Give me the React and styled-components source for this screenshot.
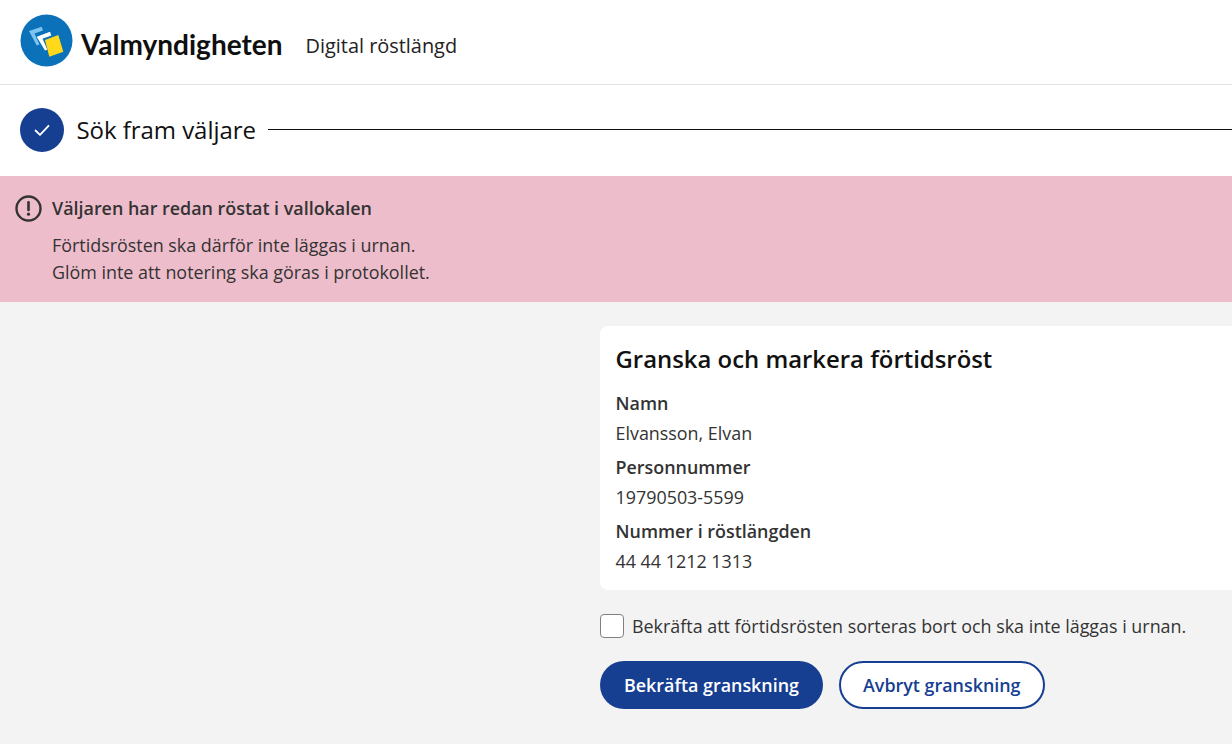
import React from "react";
import styled, { createGlobalStyle } from "styled-components";

const Global = createGlobalStyle`
  html, body { margin: 0; padding: 0; background: #fff; }
  body { font-family: "Open Sans", "Noto Sans", sans-serif; color: #333; overflow: hidden; }
  * { box-sizing: border-box; }
`;

const Page = styled.div`
  width: 1232px;
  height: 744px;
  display: flex;
  flex-direction: column;
  overflow: hidden;
`;

const Header = styled.header`
  height: 85px;
  flex: none;
  display: flex;
  align-items: center;
  padding: 0 0 4px 20px;
  border-bottom: 1px solid #e2e2e2;
`;

const Brand = styled.div`
  display: flex;
  align-items: center;
  gap: 8px;
`;

const BrandName = styled.span`
  font-family: "Lato", sans-serif;
  font-weight: 700;
  font-size: 28px;
  line-height: 32px;
  color: #0f0f0f;
  margin-top: 8px;
`;

const AppName = styled.span`
  margin: 12px 0 0 23px;
  font-size: 19.9px;
  line-height: 28px;
  color: #222;
`;

const Step = styled.section`
  height: 91px;
  flex: none;
  display: flex;
  align-items: center;
  gap: 12px;
  padding: 0 0 2px 20px;
`;

const StepBadge = styled.span`
  width: 44px;
  height: 44px;
  border-radius: 50%;
  background: #163f92;
  display: flex;
  align-items: center;
  justify-content: center;
  flex: none;
`;

const StepTitle = styled.h2`
  margin: 0 0 0 0.5px;
  font-size: 24px;
  line-height: 32px;
  font-weight: 400;
  letter-spacing: -0.05px;
  color: #111;
  white-space: nowrap;
`;

const StepLine = styled.span`
  flex: 1;
  height: 1px;
  background: #111;
`;

const Banner = styled.section`
  height: 126px;
  flex: none;
  background: #eebdcb;
  padding: 18px 16px 0 15px;
  display: grid;
  grid-template-columns: 27px 1fr;
  column-gap: 10px;
  align-content: start;
`;

const BannerIcon = styled.span`
  display: flex;
  padding-top: 1px;
`;

const BannerTitle = styled.div`
  font-size: 17.9px;
  line-height: 28px;
  font-weight: 600;
  color: #333;
`;

const BannerBody = styled.p`
  grid-column: 2;
  margin: 10px 0 0;
  font-size: 17.9px;
  line-height: 27px;
  color: #333;
`;

const Main = styled.main`
  flex: 1;
  background: #f3f3f3;
  padding: 24px 0 0 600px;
  display: flex;
  flex-direction: column;
`;

const Card = styled.section`
  height: 264px;
  width: 660px;
  flex: none;
  background: #fff;
  border-radius: 8px;
  padding: 15px 15.5px 0;
`;

const CardTitle = styled.h3`
  margin: 0 0 11px;
  font-size: 23.9px;
  line-height: 36px;
  font-weight: 600;
  color: #111;
`;

const Label = styled.div`
  font-size: 17.9px;
  line-height: 30px;
  font-weight: 600;
  color: #333;
`;

const Value = styled.div`
  font-size: 17.9px;
  line-height: 30px;
  margin-bottom: 4px;
  color: #333;
`;

const Confirm = styled.label`
  margin-top: 23px;
  display: flex;
  align-items: center;
  gap: 8px;
  font-size: 17.9px;
  line-height: 26px;
  color: #333;
`;

const Box = styled.span`
  width: 24px;
  height: 24px;
  flex: none;
  background: #fff;
  border: 1px solid #808080;
  border-radius: 4px;
`;

const Actions = styled.div`
  margin-top: 22px;
  display: flex;
  gap: 16px;
`;

const Button = styled.button`
  height: 48px;
  padding: 0 ${p => (p.$outline ? "22px" : "24px")};
  border-radius: 24px;
  font-family: inherit;
  font-size: 17.9px;
  font-weight: 600;
  color: ${p => (p.$outline ? "#163f92" : "#fff")};
  background: ${p => (p.$outline ? "#fff" : "#163f92")};
  border: ${p => (p.$outline ? "2px solid #163f92" : "none")};
`;

const Logo = () => (
  <svg width="53" height="53" viewBox="0 0 53 53" style={{ flex: "none" }}>
    <circle cx="26.5" cy="26.5" r="26" fill="#0b72b9" />
    <path d="M9 17 L21.7 12.7 L23 16.5 L14.5 19.5 L19.5 30.5 L16.7 31.5 Z" fill="#7cc4ef" />
    <path d="M16.7 22.7 L30 17.7 L31.3 21.5 L22.5 24.8 L27.5 35.5 L25 36.5 Z" fill="#fff" stroke="#0b72b9" strokeWidth="1" paintOrder="stroke" />
    <path d="M25 26 L38.3 21 L43.3 37.7 L29.3 42.7 Z" fill="#ffd91a" stroke="#0b72b9" strokeWidth="0.6" paintOrder="stroke" />
  </svg>
);

const Check = () => (
  <svg width="20" height="20" viewBox="0 0 20 20" fill="none">
    <path d="M3.5 10.5 L8 14.8 L16.5 5.8" stroke="#fff" strokeWidth="1.8" strokeLinecap="round" strokeLinejoin="round" />
  </svg>
);

const Alert = () => (
  <svg width="27" height="27" viewBox="0 0 27 27" fill="none">
    <circle cx="13.5" cy="13.5" r="12" stroke="#333" strokeWidth="2.4" />
    <path d="M13.5 7.2 V15" stroke="#333" strokeWidth="2.6" strokeLinecap="round" />
    <circle cx="13.5" cy="19.2" r="1.6" fill="#333" />
  </svg>
);

export default function App() {
  return (
    <Page>
      <Global />
      <Header>
        <Brand>
          <Logo />
          <BrandName>Valmyndigheten</BrandName>
        </Brand>
        <AppName>Digital röstlängd</AppName>
      </Header>
      <Step>
        <StepBadge><Check /></StepBadge>
        <StepTitle>Sök fram väljare</StepTitle>
        <StepLine />
      </Step>
      <Banner>
        <BannerIcon><Alert /></BannerIcon>
        <BannerTitle>Väljaren har redan röstat i vallokalen</BannerTitle>
        <BannerBody>
          Förtidsrösten ska därför inte läggas i urnan.<br />
          Glöm inte att notering ska göras i protokollet.
        </BannerBody>
      </Banner>
      <Main>
        <Card>
          <CardTitle>Granska och markera förtidsröst</CardTitle>
          <Label>Namn</Label>
          <Value>Elvansson, Elvan</Value>
          <Label>Personnummer</Label>
          <Value>19790503-5599</Value>
          <Label>Nummer i röstlängden</Label>
          <Value>44 44 1212 1313</Value>
        </Card>
        <Confirm>
          <Box />
          Bekräfta att förtidsrösten sorteras bort och ska inte läggas i urnan.
        </Confirm>
        <Actions>
          <Button>Bekräfta granskning</Button>
          <Button $outline>Avbryt granskning</Button>
        </Actions>
      </Main>
    </Page>
  );
}
